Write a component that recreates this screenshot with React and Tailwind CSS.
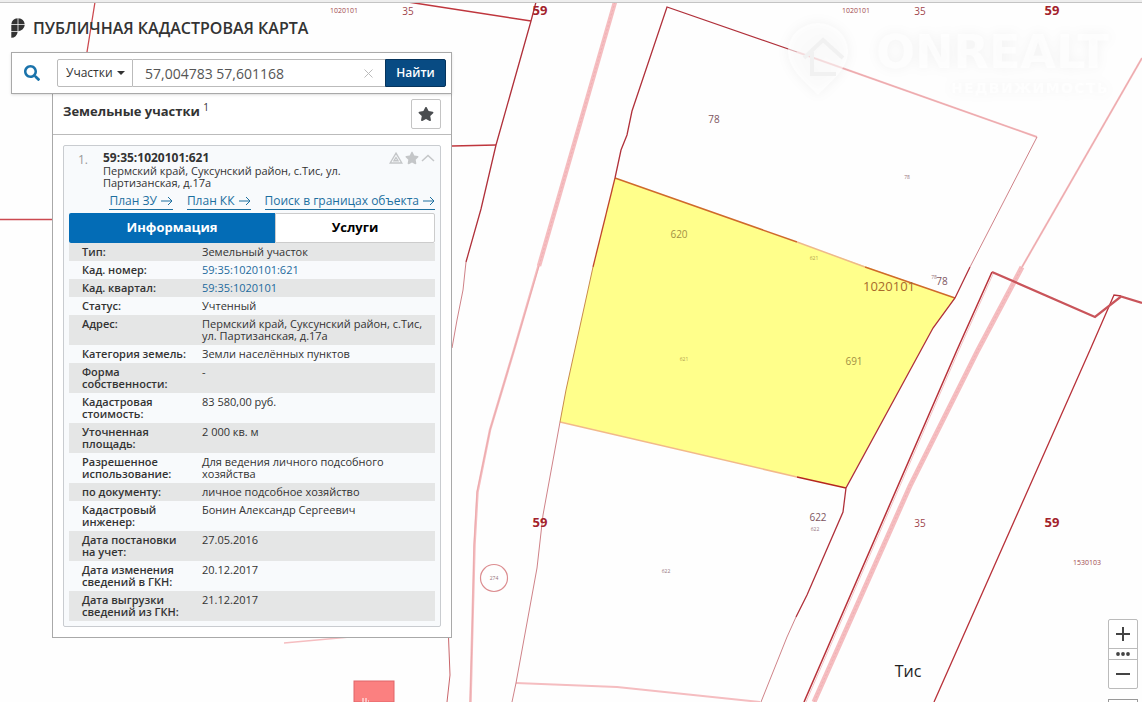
import { useState } from "react";
import { FaSearch, FaStar } from "react-icons/fa";

const FACTS = [
  { label: "Тип:", value: "Земельный участок" },
  { label: "Кад. номер:", value: "59:35:1020101:621", link: true },
  { label: "Кад. квартал:", value: "59:35:1020101", link: true },
  { label: "Статус:", value: "Учтенный" },
  { label: "Адрес:", value: "Пермский край, Суксунский район, с.Тис, ул. Партизанская, д.17а" },
  { label: "Категория земель:", value: "Земли населённых пунктов" },
  { label: "Форма собственности:", value: "-" },
  { label: "Кадастровая стоимость:", value: "83 580,00 руб." },
  { label: "Уточненная площадь:", value: "2 000 кв. м" },
  { label: "Разрешенное использование:", value: "Для ведения личного подсобного хозяйства" },
  { label: "по документу:", value: "личное подсобное хозяйство" },
  { label: "Кадастровый инженер:", value: "Бонин Александр Сергеевич" },
  { label: "Дата постановки на учет:", value: "27.05.2016" },
  { label: "Дата изменения сведений в ГКН:", value: "20.12.2017" },
  { label: "Дата выгрузки сведений из ГКН:", value: "21.12.2017" },
];

const PLAN_LINKS = ["План ЗУ", "План КК", "Поиск в границах объекта"];

const CadastreMap = () => (
  <svg
    className="absolute inset-0 h-full w-full"
    viewBox="0 0 1142 702"
    preserveAspectRatio="xMinYMin slice"
    fill="none"
    aria-label="Карта участков"
  >
    {/* Roads */}
    <g stroke="#f5bdc0">
      <path d="M615 2 L539 266" strokeWidth="4.5" />
      <path d="M539 264 L514 350 L490 430 L477.5 492 L474.5 545 L472 640 L470.500 702" strokeWidth="2.5" />
      <path d="M1142 58 L1022 267" strokeWidth="2" />
      <path d="M1022 267 L978 350 L910 486 L814 702" strokeWidth="5" />
      <path d="M797 52 L1037 137" strokeWidth="2" />
      <path d="M516 683 L617 687 L760 702" strokeWidth="2" />
      <path d="M284 643 L350 637" strokeWidth="1.5" />
    </g>
    <g stroke="#eda3a7" strokeWidth="0.6" strokeDasharray="2 2">
      <path d="M615 2 L539 266" />
      <path d="M1022 267 L978 350 L910 486 L814 702" />
    </g>
    <g stroke="#e9a4a7" strokeWidth="0.8">
      <path d="M539 266 L514 350 L490 430 L477 492 L474 545 L472 640 L470 702" />
      <path d="M1142 58 L1022 267" />
      <path d="M797 52 L1037 137" />
    </g>

    {/* Selected parcel */}
    <path d="M615 178 L955 298 L933 328 L845.500 488 L560 422 L566 390 L593 267 Z" fill="#ffff8b" />
    <path d="M560 422 L797 477" stroke="#f2b98a" strokeWidth="1.5" />
    <path d="M797 477 L846 488" stroke="#b5261e" strokeWidth="1.3" />
    <path d="M615 178 L797 242 M865 267 L955 298" stroke="#cf6a2b" strokeWidth="1.5" />
    <path d="M797 242 L865 267" stroke="#eeb98a" strokeWidth="1.5" />
    <path d="M615 178 L593 267" stroke="#c0452b" strokeWidth="1.3" />
    <path d="M593 267 L566 390 L560 422" stroke="#c98a4a" strokeWidth="1" />

    {/* Parcel borders */}
    <g stroke="#b0303a" strokeWidth="1.3">
      <path d="M95 2 L87 52 M0 219.500 H52" stroke="#cc4a50" />
      <path d="M408 2 L531 21 M452 146 L496 145" stroke="#bf363d" strokeWidth="1.5" />
      <path d="M536 2 L531 21 L496 145 L481 209 L466 262" />
      <path d="M615 178 L621 150 L627 135 L632 111 L667 7 L797 52" />
      <path d="M970 267 L955 298 L933 328 L846 488 L843 512 L807 595 L796 617" />
      <path d="M992 272 L957 350 L804 702" stroke="#b8323a" strokeWidth="1.5" />
      <path d="M1121 296 L1114 295 L1090 350 L934 702" stroke="#b8323a" />
    </g>
    <path d="M993.500 273 L959 350 L806 702" stroke="#f3c4c6" strokeWidth="1" />
    <g stroke="#cf8288" strokeWidth="1">
      <path d="M466 262 L463 290 L457 320 L452 348" />
      <path d="M1037 137 L970 267" />
      <path d="M560 422 L543 515 L537 568 L516 683 L512 702" />
      <path d="M796 617 L787 637 L761 702" />
      <path d="M448.500 637 L450 675 L447 702" stroke="#c9656a" />
    </g>
    <path d="M992 272 L1095 317 L1121 296.500 L1142 303" stroke="#c9545a" strokeWidth="2.3" />

    <circle cx="494" cy="578" r="13.5" stroke="#dc8d90" strokeWidth="1.2" />
    <rect x="354" y="681" width="40" height="21" fill="#fb8080" stroke="#e06468" />
    <path d="M362 699 h6 M362 701 h7" stroke="#fff" strokeWidth="1.2" strokeDasharray="2 1" />

    {/* Labels */}
    <g className="font-['Open_Sans',sans-serif]" textAnchor="middle">
      <g fill="#a3222b" fontSize="13" fontWeight="700">
        <text x="540" y="15">59</text>
        <text x="1052" y="15">59</text>
        <text x="540" y="527">59</text>
        <text x="1052" y="527">59</text>
      </g>
      <g fill="#a0464c" fontSize="10">
        <text x="408" y="15">35</text>
        <text x="920" y="15">35</text>
        <text x="920" y="527">35</text>
      </g>
      <g fill="#a0464c" fontSize="7">
        <text x="344" y="13">1020101</text>
        <text x="856" y="13">1020101</text>
        <text x="1087" y="565">1530103</text>
      </g>
      <g fill="#7d5560" fontSize="10">
        <text x="714" y="123">78</text>
        <text x="942" y="285">78</text>
        <text x="818" y="521">622</text>
      </g>
      <g fill="#a39044" fontSize="10">
        <text x="679" y="238">620</text>
        <text x="854" y="365">691</text>
      </g>
      <text x="889" y="291" fill="#a86b2c" fontSize="13">1020101</text>
      <g fill="#94737a" fontSize="5">
        <text x="907" y="179">78</text>
        <text x="934" y="279">78</text>
        <text x="815" y="531">622</text>
        <text x="666" y="573">622</text>
        <text x="494" y="580">274</text>
      </g>
      <g fill="#b0a04e" fontSize="5">
        <text x="814" y="260">621</text>
        <text x="684" y="361">621</text>
      </g>
      <text x="908" y="677" fill="#222" fontSize="16">Тис</text>
    </g>
  </svg>
);

const Watermark = () => (
  <div className="absolute right-[33px] top-5 flex items-center gap-6 text-white drop-shadow-[0_0_6px_rgba(0,0,0,0.08)]">
    <svg className="h-20 w-17" viewBox="0 0 64 80" fill="none">
      <path d="M32 75 C20 62 2 50 2 31 A30 28 0 0 1 62 31 C62 50 44 62 32 75 Z" fill="#fff" fillOpacity="0.6" />
      <path d="M18 38 L37 20 L57 38 M26 32 V54 H50" stroke="#f1f1f1" strokeWidth="4" />
    </svg>
    <div className="font-['DejaVu_Sans',sans-serif] font-bold opacity-60">
      <p className="text-[46px] leading-14">ONREALT</p>
      <p className="text-right text-sm leading-4 tracking-widest">НЕДВИЖИМОСТЬ</p>
    </div>
  </div>
);

const SearchBar = () => {
  const [query, setQuery] = useState("57,004783 57,601168");

  return (
    <form
      className="relative z-10 flex h-[42px] items-center border border-[#a9a9a9] bg-white pr-[5px] shadow-sm"
      onSubmit={(e) => e.preventDefault()}
    >
      <FaSearch className="mx-3 size-4 text-[#1a73ab]" />
      <div className="ml-[5px] flex h-7 flex-1">
        <div className="relative w-[76px]">
          <select
            aria-label="Что искать"
            className="h-full w-full appearance-none rounded-l-xs border border-[#bbb] bg-white pl-2 text-xs text-[#333]"
          >
            <option>Участки</option>
          </select>
          <span className="pointer-events-none absolute right-2 top-3 border-x-4 border-t-4 border-x-transparent border-t-[#333]" />
        </div>
        <div className="relative flex-1">
          <input
            aria-label="Поисковый запрос"
            value={query}
            onChange={(e) => setQuery(e.target.value)}
            className="h-full w-full border-y border-[#bbb] bg-white pl-3 pr-8 text-sm text-[#555]"
          />
          <button
            type="button"
            aria-label="Очистить"
            onClick={() => setQuery("")}
            className="absolute right-3 top-2.5"
          >
            <svg className="size-[9px]" viewBox="0 0 9 9" stroke="#bbb">
              <path d="M0.5 0.5 L8.5 8.5 M8.5 0.5 L0.5 8.500" />
            </svg>
          </button>
        </div>
        <button type="submit" className="w-[61px] rounded-r-xs border border-[#06345c] bg-[#084b83] text-xs font-semibold text-white">
          Найти
        </button>
      </div>
    </form>
  );
};

const ParcelCard = () => (
  <article className="m-2.5 rounded-xs border border-[#c9ccd0] bg-[#f8fafc] p-[5px]">
    <div className="flex text-[11px] leading-3">
      <span className="w-[34px] pl-[9px] pt-px text-xs text-[#999]">1.</span>
      <div className="flex-1">
        <h3 className="text-xs leading-[14px] font-bold">59:35:1020101:621</h3>
        <p className="w-60">Пермский край, Суксунский район, с.Тис, ул. Партизанская, д.17а</p>
      </div>
      <div className="flex h-3.5 items-center gap-0.5 text-[#c4c6c8]">
        <svg className="h-3 w-3.5" viewBox="0 0 14 12" fill="none" stroke="currentColor" strokeWidth="1.4">
          <path d="M7 1.200 L12.800 11 H1.200 Z M7 5.500 L9 8.700 H5 Z" />
        </svg>
        <FaStar className="size-3.5" />
        <svg className="h-2 w-3.5" viewBox="0 0 14 8" fill="none" stroke="currentColor" strokeWidth="1.5">
          <path d="M1 7 L7 1.500 L13 7" />
        </svg>
      </div>
    </div>

    <nav className="mt-1 flex justify-end gap-3.5 text-xs leading-4 text-[#1d6f9f]">
      {PLAN_LINKS.map((name) => (
        <a key={name} href="#" className="flex items-center gap-1 border-b border-[#1d6f9f]">
          {name}
          <svg className="h-2.5 w-3" viewBox="0 0 12 10" fill="none" stroke="currentColor">
            <path d="M0 5 H11 M7 1 L11 5 L7 9" />
          </svg>
        </a>
      ))}
    </nav>

    <div className="mt-[3px] flex h-[30px] text-[13px] font-bold" role="tablist">
      <button role="tab" aria-selected="true" className="w-[206px] rounded-l-xs bg-[#036cb6] text-white">
        Информация
      </button>
      <button role="tab" aria-selected="false" className="flex-1 rounded-r-xs border border-[#ccc] bg-white text-black">
        Услуги
      </button>
    </div>

    <table className="w-full table-fixed text-left text-[11px] leading-3">
      <tbody>
        {FACTS.map((fact) => (
          <tr key={fact.label} className="align-top odd:bg-[#e5e6e6]">
            <th className="w-[127px] py-[3px] pl-[13px] pr-2 font-semibold">{fact.label}</th>
            <td className="py-[3px] pl-1.5">
              {fact.link ? (
                <a href="#" className="text-[#1d6a9d]">{fact.value}</a>
              ) : (
                fact.value
              )}
            </td>
          </tr>
        ))}
      </tbody>
    </table>
  </article>
);

const ZoomControls = () => (
  <div className="absolute -bottom-[27px] right-1 flex w-[30px] flex-col gap-2.5">
    <div className="flex flex-col divide-y divide-[#bbb] rounded-xs border border-[#bbb] bg-white text-[#444]">
      <button aria-label="Приблизить" className="flex h-[29px] items-center justify-center">
        <svg className="size-3.5" viewBox="0 0 14 14" stroke="currentColor" strokeWidth="2">
          <path d="M0 7 H14 M7 0 V14" />
        </svg>
      </button>
      <button aria-label="Масштаб" className="flex h-[11px] items-center justify-center">
        <svg className="h-1 w-3.5" viewBox="0 0 14 4" fill="currentColor">
          <circle cx="2" cy="2" r="1.900" />
          <circle cx="7" cy="2" r="1.900" />
          <circle cx="12" cy="2" r="1.900" />
        </svg>
      </button>
      <button aria-label="Отдалить" className="flex h-7 items-center justify-center">
        <svg className="size-3.5" viewBox="0 0 14 14" stroke="currentColor" strokeWidth="2">
          <path d="M0 7 H14" />
        </svg>
      </button>
    </div>
    <button aria-label="Слои" className="h-[30px] border border-[#999] bg-white" />
  </div>
);

export default function App() {
  return (
    <div className="relative min-h-screen overflow-hidden bg-[#fefefe] font-['Open_Sans',sans-serif] text-[#333]">
      <CadastreMap />
      <Watermark />

      <div className="relative h-[3px] border-b border-[#c4c4c4] bg-[#eee]" />

      <div className="relative ml-[11px] w-[441px]">
        <header className="flex h-[49px] items-center gap-2">
          <svg className="h-5 w-3.5" viewBox="0 0 14 20" fill="#333">
            <path d="M6.600 0.200 V6.200 H0.300 A6.800 6.800 0 0 1 6.600 0.200 Z M7.400 0.200 A6.800 6.800 0 0 1 13.700 6.200 H7.400 Z M0.300 7 H6.600 V13.200 H0.300 Z M7.400 7 H13.700 A6.800 6.800 0 0 1 7.400 13.200 Z M0.300 14 H6.600 A6.200 6.200 0 0 1 0.300 19.800 Z" />
          </svg>
          <h1 className="text-base font-semibold">ПУБЛИЧНАЯ КАДАСТРОВАЯ КАРТА</h1>
        </header>

        <SearchBar />

        <section className="ml-[41px] border border-t-0 border-[#a9a9a9] bg-white">
          <div className="flex h-[41px] items-center justify-between border-b border-[#bbb] px-2.5">
            <h2 className="pb-1 text-[13px] font-bold">
              Земельные участки <sup className="text-[10px] font-normal">1</sup>
            </h2>
            <button aria-label="В избранное" className="flex size-[30px] items-center justify-center rounded-xs border border-[#c4c4c4]">
              <FaStar className="size-4 text-[#4a4d50]" />
            </button>
          </div>
          <ParcelCard />
        </section>
      </div>

      <ZoomControls />
    </div>
  );
}
